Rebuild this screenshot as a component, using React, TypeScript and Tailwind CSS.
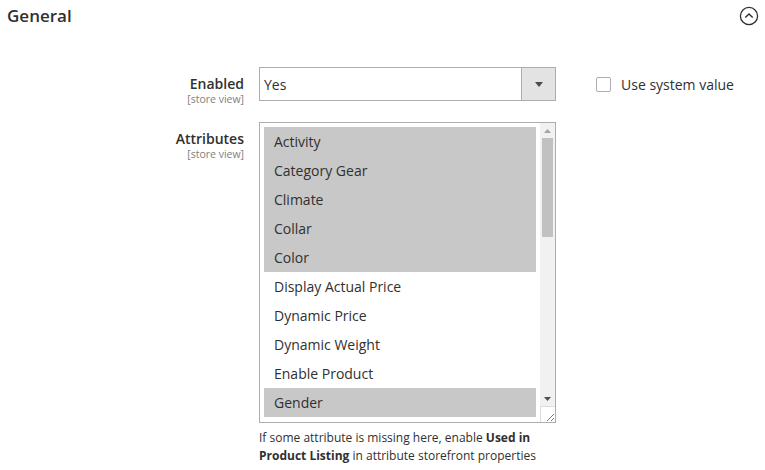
import React from 'react';

const attributes = [
  { name: 'Activity', selected: true },
  { name: 'Category Gear', selected: true },
  { name: 'Climate', selected: true },
  { name: 'Collar', selected: true },
  { name: 'Color', selected: true },
  { name: 'Display Actual Price', selected: false },
  { name: 'Dynamic Price', selected: false },
  { name: 'Dynamic Weight', selected: false },
  { name: 'Enable Product', selected: false },
  { name: 'Gender', selected: true },
];

function FieldLabel({ text }: { text: string }) {
  return (
    <div className="w-[244px] shrink-0 text-right pt-[8px]">
      <div className="text-[14px] leading-[18px] font-semibold text-[#303030]">{text}</div>
      <div className="text-[10.5px] leading-[13px] text-[#808080]">[store view]</div>
    </div>
  );
}

function Scrollbar() {
  return (
    <div className="w-[15px] shrink-0 flex flex-col bg-[#f1f1f1]">
      {/* up arrow */}
      <div className="h-[15px] flex items-center justify-center">
        <svg width="7" height="4" viewBox="0 0 7 4">
          <path d="M0 4 L3.5 0 L7 4 Z" fill="#a3a3a3" />
        </svg>
      </div>
      {/* track */}
      <div className="flex-1 px-[2px]">
        <div className="h-[99px] bg-[#c1c1c1]" />
      </div>
      {/* down arrow */}
      <div className="h-[15px] flex items-center justify-center">
        <svg width="7" height="4" viewBox="0 0 7 4">
          <path d="M0 0 L7 0 L3.5 4 Z" fill="#505050" />
        </svg>
      </div>
      {/* resizer */}
      <div className="h-[16px] bg-white border-l border-t border-[#dcdcdc] flex items-end justify-end">
        <svg width="12" height="12" viewBox="0 0 12 12">
          <path d="M11 4 L4 11 M11 8 L8 11" stroke="#7a7a7a" strokeWidth="1" />
        </svg>
      </div>
    </div>
  );
}

export default function App() {
  return (
    <div className="w-[765px] h-[470px] bg-white overflow-hidden font-['Open_Sans',sans-serif] text-[#303030]">
      {/* Section header */}
      <div className="flex items-center justify-between pl-[7px] pr-[6px] pt-[4px]">
        <h2 className="text-[17px] leading-[23px] font-semibold text-[#303030]">General</h2>
        <svg width="20" height="20" viewBox="0 0 20 20">
          <circle cx="10" cy="10" r="8.6" fill="none" stroke="#303030" strokeWidth="1.3" />
          <path d="M6.3 11.6 L10 7.9 L13.7 11.6" fill="none" stroke="#303030" strokeWidth="1.4" />
        </svg>
      </div>

      {/* Enabled row */}
      <div className="flex items-start mt-[40px]">
        <FieldLabel text="Enabled" />
        <div className="ml-[15px] w-[297px] h-[34px] border border-[#adadad] flex">
          <div className="flex-1 flex items-center pl-[4px] text-[14px]">Yes</div>
          <div className="w-[34px] bg-[#e3e3e3] border-l border-[#adadad] flex items-center justify-center">
            <svg width="8" height="5" viewBox="0 0 8 5">
              <path d="M0 0 L8 0 L4 5 Z" fill="#514943" />
            </svg>
          </div>
        </div>
        <label className="ml-[40px] flex items-center gap-[10px] h-[34px]">
          <span className="w-[15px] h-[15px] border border-[#adadad] rounded-[2px] bg-white" />
          <span className="text-[14px] text-[#303030]">Use system value</span>
        </label>
      </div>

      {/* Attributes row */}
      <div className="flex items-start mt-[16px]">
        <FieldLabel text="Attributes" />
        <div className="ml-[15px] w-[297px]">
          <div className="h-[301px] border border-[#adadad] flex">
            <div className="flex-1 pt-[4px] px-[4px] overflow-hidden">
              {attributes.map((a) => (
                <div
                  key={a.name}
                  className={`h-[29px] flex items-center pl-[10px] text-[14px] text-[#303030] ${
                    a.selected ? 'bg-[#c8c8c8]' : ''
                  }`}
                >
                  {a.name}
                </div>
              ))}
            </div>
            <Scrollbar />
          </div>
          <div className="mt-[6px] text-[12px] leading-[18px] text-[#303030]">
            <div>
              If some attribute is missing here, enable <b className="font-bold">Used in</b>
            </div>
            <div>
              <b className="font-bold">Product Listing</b> in attribute storefront properties
            </div>
          </div>
        </div>
      </div>
    </div>
  );
}
